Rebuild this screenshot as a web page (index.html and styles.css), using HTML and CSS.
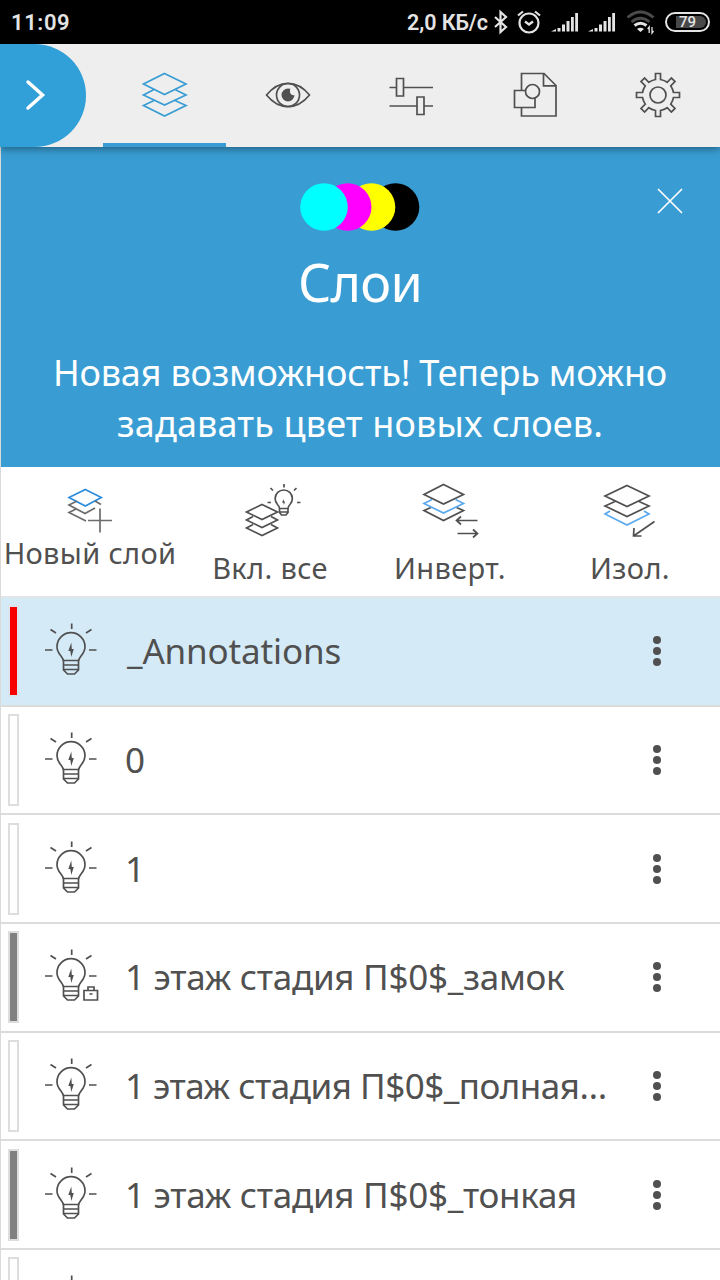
FILE: index.html
```html
<!DOCTYPE html>
<html lang="ru">
<head>
    <meta charset="UTF-8">
    <meta name="viewport" content="width=device-width, initial-scale=1.0">
    <title>Слои</title>
    <link rel="stylesheet" href="styles.css">
</head>
<body>

    <svg class="sprite">
        <symbol id="bulb" viewBox="0 0 56 56">
            <path d="M21.5 39.5C21.5 34.5 15 32.500 15 24.700a14 14 0 0 1 28 0C43 32.500 36.500 34.500 36.500 39.500M21.500 38.500h15v9.500l-4 4h-7l-4-4zM21.500 43h15M21.500 47.500h15" />
            <path d="M29.700 1.500v5.500M3 28h7.500M47 28h7.500M8.500 7.500l5.500 3.500M49.500 7.500l-5.500 3.500" />
            <path class="solid" d="M29.300 20.500l-3 8.500h2l1 6 2.500-8h-2z" />
        </symbol>
        <symbol id="signal" viewBox="0 0 28 22">
            <path d="M0 20.500l5-2.500v2.500zM6.500 17h3v3.500h-3zM11 13.500h3v7h-3zM15.500 10h3v10.500h-3zM20 6h2.800v14.500h-2.800zM24.200 2h2.800v18.500h-2.800z" />
        </symbol>
    </svg>

    <div class="status">
        <span class="time">11:09</span>
        <div class="indicators">
            <span class="speed">2,0 КБ/с</span>
            <svg class="bluetooth" width="16" height="24" viewBox="0 0 16 24"><path d="M2 7l11 10-5.500 5V2L13 7 2 17" /></svg>
            <svg class="alarm" width="26" height="24" viewBox="0 0 26 24"><circle cx="13" cy="13" r="9.500" /><path d="M9 11.500l4 3 4-3M2 5.500l5-4M24 5.500l-5-4" /></svg>
            <svg class="signal" width="28" height="22"><use href="#signal" /></svg>
            <svg class="signal second" width="28" height="22"><use href="#signal" /></svg>
            <svg class="wifi" width="30" height="24" viewBox="0 0 30 24">
                <path class="dim" d="M1.500 7.500q13-11 26 0M5.500 12q9-7.500 18 0" />
                <path class="arc" d="M8.500 15.500q6-4.500 12 0" />
                <path class="solid" d="M11 19q3.500-2.500 7 0L14.500 22z" />
                <path class="data" d="M23.200 23v-6l-1.500 2M26 17v6l1.500-2" />
            </svg>
            <div class="battery"><span>79</span></div>
        </div>
    </div>

    <nav>
        <button class="expand">
            <svg width="24" height="34" viewBox="0 0 24 34"><path d="M5 4l14.500 13L5 30" /></svg>
        </button>
        <div class="tabs">
            <a class="tab active">
                <svg width="48" height="48"><path d="M23.500 2.500L45 13 23.500 23.500 2.500 13zM13 18.500L2.500 24l21 10L45 24 34 18.500M13 29.500L2.500 34.500l21 10.500L45 34.500 34 29.500" /></svg>
            </a>
            <a class="tab">
                <svg width="48" height="48"><path d="M2.500 24Q12 12.300 24 12.300T45.500 24Q36 35.700 24 35.700T2.500 24z" /><circle cx="24" cy="24" r="11.500" /><path class="solid" d="M24 17.500a6.500 6.500 0 1 0 6.500 6.500 3.500 3.500 0 0 1-4.500-4q0-1.500.3-2.200z" /></svg>
            </a>
            <a class="tab">
                <svg width="48" height="48" viewBox="1 0 48 48"><path d="M2.500 16.500h7M16.500 16.500H46M9.500 7.500h7V25h-7zM2.500 35H30M37 35h9M30 26h7v17.500h-7z" /></svg>
            </a>
            <a class="tab">
                <svg width="48" height="48" viewBox="1 0 48 48"><path d="M11.500 2.500H34l12 12V45H11.500zM33.500 2.500v12.300H46" /><path class="paper" d="M4.500 19.500H25v17H4.500z" /><circle class="paper" cx="22.500" cy="20.500" r="7" /></svg>
            </a>
            <a class="tab">
                <svg width="48" height="48" viewBox="-24 -24 48 48"><circle r="8" /><path d="M-2.500-21.500h5v6q4 .8 6.700 2.800l4.200-4.300L17-13.400l-4.300 4.200q2 3 2.800 6.700h6v5h-6q-.8 3.700-2.800 6.700l4.300 4.200L13.400 17l-4.200-4.300q-3 2-6.700 2.800v6h-5v-6q-3.700-.8-6.700-2.800L-13.400 17-17 13.400l4.300-4.200q-2-3-2.800-6.700h-6v-5h6q.8-3.700 2.800-6.700L-17-13.400-13.400-17l4.200 4.300q3-2 6.700-2.800z" /></svg>
            </a>
        </div>
    </nav>

    <div class="panel">
        <div class="banner">
            <svg class="cmyk" width="120" height="48">
                <circle cx="95.500" cy="24" r="23.800" fill="#000" />
                <circle cx="71.500" cy="24" r="23.800" fill="#ff0" />
                <circle cx="47.700" cy="24" r="23.800" fill="#f0f" />
                <circle cx="24" cy="24" r="23.800" fill="#0ff" />
            </svg>
            <h1>Слои</h1>
            <p>Новая возможность! Теперь можно</p>
            <p class="wide">задавать цвет новых слоев.</p>
            <button class="close">
                <svg width="28" height="28"><path d="M2 2l24 24M26 2L2 26" /></svg>
            </button>
        </div>

        <div class="actions">
            <button class="action new">
                <svg width="60" height="60"><path class="bright" d="M25.300 7.500l16 8-16 8.500L9 15.500z" /><path class="grey" d="M17 19l-8 4 16 8.500L35 26M35 19l6 3.500M16 27l-7 3.500L26 39M40 26.500v24M28 38.500h24" /></svg>
                <span>Новый слой</span>
            </button>
            <button class="action">
                <svg width="60" height="60"><path d="M22 22.500L37.500 30 22 37.500 6.500 30zM13 34.500l-6.500 3.500L22 45.500 37.500 38 31 34.500M13 42.500L6.500 46 22 53.500 37.500 46 31 42.500" /><path d="M39.500 26.500q0-2-2-4a8.600 8.600 0 1 1 12.500 0q-2 2-2 4v4l-2 2.500h-4.500l-2-2.500zM39.500 26.500H48M39.500 30H48M44 2v3.500M27.500 20.500H31M57 20.500h3.500M30.500 6L33 8.500M56.500 6L54 8.500" /><path class="solid" d="M43.500 17l-1.500 3.500h1.300l.5 2.500 1.400-3.500h-1.300z" /></svg>
                <span>Вкл. все</span>
            </button>
            <button class="action">
                <svg width="60" height="60"><path d="M23.500 2.500l20 10-20 9.500L4 12.500zM11 25.500l-7 3 19.500 10 20-10-7-3" /><path class="blue" d="M12 17.500L4 21.500 23.500 31l20-9.500-8-4" /><path d="M57.500 38.500h-21M41 34.500l-4.500 4 4.500 4M37.500 51.500h20M53 47.500l4.500 4-4.500 4" /></svg>
                <span>Инверт.</span>
            </button>
            <button class="action">
                <svg width="60" height="60"><path d="M27 3.500L49 14 27 24.500 5 14zM15 19.500L5 24l22 10.500L49 24l-10-4.500" /><path class="blue" d="M10 29l-5 3 22 11 22-11-5-3" /><path d="M54.500 39.500L33.500 54M34 46l-.5 8h8" /></svg>
                <span>Изол.</span>
            </button>
        </div>

        <div class="layers">
            <div class="layer selected">
                <i class="swatch red"></i>
                <svg class="bulb"><use href="#bulb" /></svg>
                <span class="name">_Annotations</span>
                <button class="more"><i></i><i></i><i></i></button>
            </div>
            <div class="layer">
                <i class="swatch"></i>
                <svg class="bulb"><use href="#bulb" /></svg>
                <span class="name">0</span>
                <button class="more"><i></i><i></i><i></i></button>
            </div>
            <div class="layer">
                <i class="swatch"></i>
                <svg class="bulb"><use href="#bulb" /></svg>
                <span class="name">1</span>
                <button class="more"><i></i><i></i><i></i></button>
            </div>
            <div class="layer">
                <i class="swatch grey"></i>
                <svg class="bulb"><use href="#bulb" /><path d="M42 42.500h13.500v9.500H42zM46 42.500V39h6v3.500M47.500 46h3" /></svg>
                <span class="name">1 этаж стадия П$0$_замок</span>
                <button class="more"><i></i><i></i><i></i></button>
            </div>
            <div class="layer">
                <i class="swatch"></i>
                <svg class="bulb"><use href="#bulb" /></svg>
                <span class="name long">1 этаж стадия П$0$_полная…</span>
                <button class="more"><i></i><i></i><i></i></button>
            </div>
            <div class="layer">
                <i class="swatch grey"></i>
                <svg class="bulb"><use href="#bulb" /></svg>
                <span class="name">1 этаж стадия П$0$_тонкая</span>
                <button class="more"><i></i><i></i><i></i></button>
            </div>
            <div class="layer">
                <i class="swatch"></i>
                <svg class="bulb"><use href="#bulb" /></svg>
            </div>
        </div>
    </div>

</body>
</html>
```
FILE: styles.css
```css
* {
    margin: 0;
    padding: 0;
    box-sizing: border-box;
}

body {
    width: 720px;
    height: 1280px;
    overflow: hidden;
    display: flex;
    flex-direction: column;
    background-color: #fff;
    color: #505050;
    font-family: "Noto Sans", sans-serif;
}

button {
    border: none;
    background: none;
    color: inherit;
    font: inherit;
}

svg {
    display: block;
    flex-shrink: 0;
    overflow: visible;
    fill: none;
    stroke: #505050;
    stroke-width: 1.7;
}

.sprite {
    position: absolute;
    width: 0;
    height: 0;
}

.solid {
    fill: #505050;
    stroke: none;
}

/* status bar */

.status {
    flex: none;
    height: 44px;
    display: flex;
    align-items: center;
    justify-content: space-between;
    padding: 0 10px 0 11px;
    background-color: #000;
    color: #e4e4e4;
    font-family: Roboto, sans-serif;
    font-size: 22px;
    font-weight: 500;
}

.time {
    font-weight: 600;
    letter-spacing: .6px;
    padding-top: 1px;
}

.indicators {
    display: flex;
    align-items: center;
}

.speed {
    font-size: 21.5px;
    font-weight: 600;
    letter-spacing: -.1px;
}

.status svg {
    stroke: #e4e4e4;
    stroke-width: 2.2;
}

.bluetooth {
    margin-left: 5px;
}

.alarm {
    margin-left: 7px;
}

.status .signal {
    margin-left: 9px;
    fill: #e4e4e4;
    stroke: none;
}

.wifi {
    margin-left: 10px;
}

.wifi .dim {
    stroke: #4a4a4a;
    stroke-width: 2.8;
}

.wifi .arc {
    stroke-width: 3;
}

.wifi .solid {
    fill: #e4e4e4;
}

.wifi .data {
    stroke-width: 1.3;
}

.battery {
    width: 45px;
    height: 20px;
    margin-left: 9px;
    padding: 2px 2px 2px 9px;
    border: 2px solid #e4e4e4;
    border-radius: 10px;
}

.battery span {
    display: block;
    height: 12px;
    padding-left: 3px;
    border-radius: 0 6px 6px 0;
    background-color: #484848;
    font-size: 15px;
    line-height: 12px;
}

/* tabs */

nav {
    flex: none;
    height: 103px;
    display: flex;
    background-color: #eee;
    position: relative;
    z-index: 1;
    box-shadow: 0 2px 8px rgba(0, 0, 0, .4);
}

.expand {
    width: 86px;
    margin-right: 17px;
    padding: 0 0 2px 23px;
    border-radius: 0 52px 52px 0;
    background-color: #319fd8;
}

.expand svg {
    stroke: #fff;
    stroke-width: 3.5;
    stroke-linecap: round;
}

.tabs {
    flex: 1;
    display: flex;
}

.tab {
    flex: 1;
    display: flex;
    align-items: center;
    justify-content: center;
    border-bottom: 4px solid transparent;
    padding-top: 3px;
}

.tab.active {
    border-color: #399dd3;
}

.tab.active svg {
    stroke: #399dd3;
}

.paper {
    fill: #eee;
}

/* banner */

.panel {
    flex: 1;
    min-height: 0;
    overflow: hidden;
    border-left: 1px solid #dadada;
}

.banner {
    height: 320px;
    padding: 36px 1px 0 0;
    position: relative;
    background-color: #399dd3;
    color: #fff;
    text-align: center;
}

.cmyk {
    margin: 0 auto;
    stroke: none;
}

h1 {
    margin: 16px 0 30px;
    font-size: 52px;
    font-weight: 400;
    line-height: 70px;
    letter-spacing: -.8px;
}

.banner p {
    font-size: 36px;
    line-height: 51px;
    letter-spacing: -.2px;
    white-space: nowrap;
}

.banner p.wide {
    letter-spacing: .15px;
}

.close {
    position: absolute;
    top: 40px;
    right: 36px;
}

.close svg {
    stroke: #fff;
}

/* toolbar */

.actions {
    height: 131px;
    display: grid;
    grid-template-columns: repeat(4, 180px);
    margin-left: -1px;
    border-bottom: 2px solid #e3e6e8;
}

.action {
    display: flex;
    flex-direction: column;
    align-items: center;
    padding-top: 15px;
    font-size: 29px;
    line-height: 40px;
    letter-spacing: .35px;
    white-space: nowrap;
}

.action span {
    margin-top: 6px;
}

.action.new span {
    margin-top: -9px;
}

.action .bright {
    stroke: #2c8ddd;
}

.action .grey {
    stroke: #6c6c6c;
}

.action .blue {
    stroke: #5aa9ee;
}

/* layer list */

.layer {
    height: 108.667px;
    display: flex;
    align-items: center;
    padding-left: 7px;
    border-bottom: 2px solid #dcdcdc;
}

.layer.selected {
    background-color: #d4eaf7;
}

.swatch {
    width: 11px;
    height: 92px;
    border: 2px solid #ddd;
}

.swatch.red {
    background-color: #f60000;
    border-color: #dbe3ec;
}

.swatch.grey {
    background-color: #808080;
}

.bulb {
    width: 56px;
    height: 56px;
    margin-left: 23px;
    margin-top: -2px;
}

.name {
    flex: 1;
    margin-left: 27px;
    font-size: 35px;
    line-height: 50px;
    letter-spacing: -.28px;
    white-space: nowrap;
}

.name.long {
    letter-spacing: -.5px;
}

.selected .name {
    margin-left: 29px;
    letter-spacing: -.15px;
}

.more {
    width: 8px;
    margin-right: 59px;
    display: flex;
    flex-direction: column;
    gap: 3px;
}

.more i {
    width: 8px;
    height: 8px;
    border-radius: 50%;
    background-color: #505050;
}
```
